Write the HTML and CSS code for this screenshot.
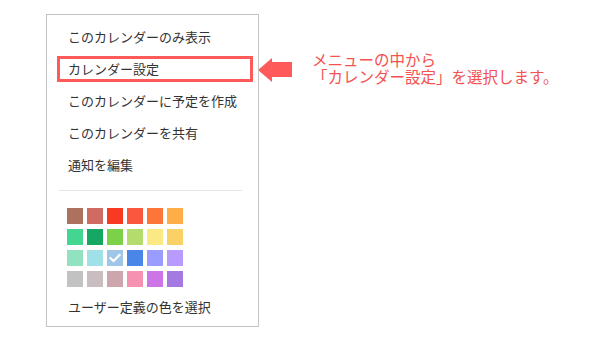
FILE: index.html
```html
<!DOCTYPE html>
<html lang="ja">
<head>
<meta charset="utf-8">
<link rel="stylesheet" href="styles.css">
</head>
<body>
<div class="page">
  <div class="menu">
    <div class="item">このカレンダーのみ表示</div>
    <div class="item item-hl">カレンダー設定</div>
    <div class="item">このカレンダーに予定を作成</div>
    <div class="item">このカレンダーを共有</div>
    <div class="item">通知を編集</div>
    <div class="sep"></div>
    <div class="grid">
      <span class="sw" style="background:#ac725e"></span>
      <span class="sw" style="background:#d06b64"></span>
      <span class="sw" style="background:#f83a22"></span>
      <span class="sw" style="background:#fa573c"></span>
      <span class="sw" style="background:#ff7537"></span>
      <span class="sw" style="background:#ffad46"></span>
      <span class="sw" style="background:#42d692"></span>
      <span class="sw" style="background:#16a765"></span>
      <span class="sw" style="background:#7bd148"></span>
      <span class="sw" style="background:#b3dc6c"></span>
      <span class="sw" style="background:#fbe983"></span>
      <span class="sw" style="background:#fad165"></span>
      <span class="sw" style="background:#92e1c0"></span>
      <span class="sw" style="background:#9fe1e7"></span>
      <span class="sw sw-check" style="background:#9fc6e7"><svg width="16" height="16" viewBox="0 0 16 16"><path d="M3.5 8.2 L6.5 11 L12.5 5" fill="none" stroke="#fff" stroke-width="2.2" stroke-linecap="square"/></svg></span>
      <span class="sw" style="background:#4986e7"></span>
      <span class="sw" style="background:#9a9cff"></span>
      <span class="sw" style="background:#b99aff"></span>
      <span class="sw" style="background:#c2c2c2"></span>
      <span class="sw" style="background:#cabdbf"></span>
      <span class="sw" style="background:#cca6ac"></span>
      <span class="sw" style="background:#f691b2"></span>
      <span class="sw" style="background:#cd74e6"></span>
      <span class="sw" style="background:#a47ae2"></span>
    </div>
    <div class="item">ユーザー定義の色を選択</div>
  </div>
  <div class="note">
    <svg class="arrow" width="34" height="24" viewBox="0 0 34 24"><polygon points="0,12 14,0 14,4 34,4 34,19 14,19 14,24" fill="#ff5a5a"/></svg>
    <div class="note-text">メニューの中から<br>「カレンダー設定」を選択します。</div>
  </div>
</div>
</body>
</html>
```
FILE: styles.css
```css
html, body {
  margin: 0;
  padding: 0;
  background: #fff;
}
body {
  font-family: "Noto Sans CJK JP", "Noto Sans", sans-serif;
}
.page {
  display: flex;
  align-items: flex-start;
  padding: 14px 0 0 46px;
}
.menu {
  position: relative;
  width: 211px;
  border: 1px solid #c3c3c3;
  padding: 6px 0 3px 0;
}
.item {
  height: 32px;
  line-height: 32px;
  font-size: 13px;
  color: #333;
  padding-left: 21px;
}
.item-hl {
  position: relative;
}
.item-hl::after {
  content: "";
  position: absolute;
  left: 10px;
  top: 3px;
  width: 196px;
  height: 26px;
  box-sizing: border-box;
  border: 3px solid #ff5a5a;
}
.sep {
  height: 1px;
  background: #e6e6e6;
  margin: 9px 16px 17px 12px;
}
.grid {
  display: grid;
  grid-template-columns: repeat(6, 16px);
  grid-auto-rows: 16px;
  column-gap: 4px;
  row-gap: 5px;
  padding-left: 20px;
  margin-bottom: 4px;
}
.sw {
  display: block;
  width: 16px;
  height: 16px;
}
.sw svg {
  display: block;
}
.note {
  display: flex;
  align-items: flex-start;
}
.arrow {
  display: block;
  margin-top: 44px;
  margin-left: -1px;
}
.note-text {
  margin-left: 20px;
  margin-top: 37px;
  font-size: 15.5px;
  line-height: 17px;
  color: #f4524f;
}
```
